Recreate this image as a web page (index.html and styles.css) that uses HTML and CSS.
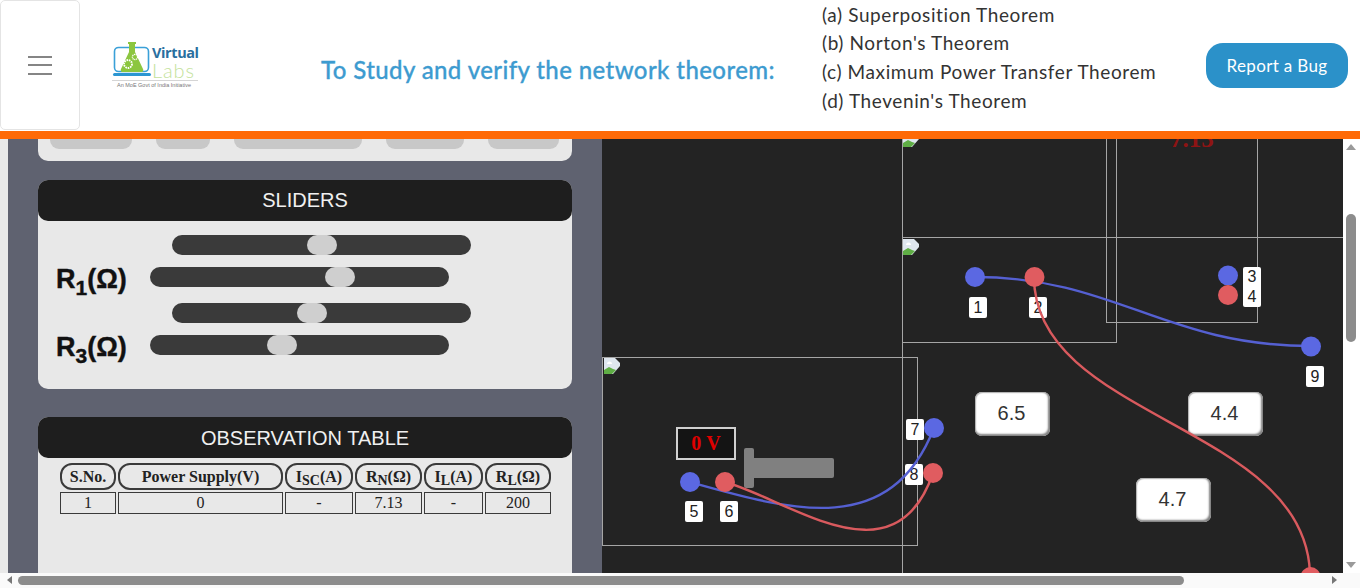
FILE: index.html
```html
<!DOCTYPE html>
<html lang="en">
<head>
<meta charset="utf-8">
<title>Virtual Labs - Network Theorem</title>
<link rel="stylesheet" href="styles.css">
</head>
<body>
<div class="page">
  <header class="topbar">
    <button class="menu" aria-label="Menu"><span></span><span></span><span></span></button>
    <svg class="logo" viewBox="0 0 88 50" width="88" height="50">
      <rect x="2.5" y="6.5" width="34" height="24" rx="4" fill="none" stroke="#3aa0d8" stroke-width="1.6"/>
      <rect x="1" y="32" width="38" height="3" rx="1.5" fill="#2b96d2"/>
      <path d="M16 1h8v2h-1v8l8 17a2 2 0 0 1-2 3H11a2 2 0 0 1-2-3l8-17V3h-1z" fill="#8cc63f"/>
      <circle cx="16" cy="23" r="4" fill="none" stroke="#fff" stroke-width="1.8" stroke-dasharray="1.6 .8"/>
      <circle cx="23" cy="16" r="2.6" fill="none" stroke="#fff" stroke-width="1.3" stroke-dasharray="1.2 .6"/>
      <text class="logo-virtual" x="40" y="17">Virtual</text>
      <text class="logo-labs" x="40" y="37">Labs</text>
      <rect x="0" y="39" width="86" height="1" fill="#d5d5d5"/>
      <text class="logo-tag" x="5" y="46">An MoE Govt of India Initiative</text>
    </svg>
    <h1 class="title">To Study and verify the network theorem:</h1>
    <ul class="aims">
      <li>(a) Superposition Theorem</li>
      <li>(b) Norton's Theorem</li>
      <li>(c) Maximum Power Transfer Theorem</li>
      <li>(d) Thevenin's Theorem</li>
    </ul>
    <button class="bug">Report a Bug</button>
  </header>

  <div class="main">
    <div class="gutter"></div>
    <aside class="panel">
      <section class="card card-controls">
        <div class="pills">
          <span class="pill p1"></span><span class="pill p2"></span><span class="pill p3"></span><span class="pill p4"></span><span class="pill p5"></span>
        </div>
      </section>

      <section class="card card-sliders">
        <h2 class="card-head">SLIDERS</h2>
        <div class="sliders">
          <div class="track track-top"><span class="thumb" style="left:135px"></span></div>
          <div class="slider-row">
            <div class="r-label">R<sub>1</sub>(Ω)</div>
            <div class="track"><span class="thumb" style="left:175px"></span></div>
          </div>
          <div class="track track-top gap-big"><span class="thumb" style="left:125px"></span></div>
          <div class="slider-row">
            <div class="r-label">R<sub>3</sub>(Ω)</div>
            <div class="track"><span class="thumb" style="left:117px"></span></div>
          </div>
        </div>
      </section>

      <section class="card card-table">
        <h2 class="card-head">OBSERVATION TABLE</h2>
        <table class="obs">
          <thead>
            <tr>
              <th class="c1">S.No.</th>
              <th class="c2">Power Supply(V)</th>
              <th class="c3">I<sub>SC</sub>(A)</th>
              <th class="c4">R<sub>N</sub>(Ω)</th>
              <th class="c5">I<sub>L</sub>(A)</th>
              <th class="c6">R<sub>L</sub>(Ω)</th>
            </tr>
          </thead>
          <tbody>
            <tr><td>1</td><td>0</td><td>-</td><td>7.13</td><td>-</td><td>200</td></tr>
          </tbody>
        </table>
      </section>
    </aside>

    <main class="canvas">
      <div class="box b-top"></div>
      <div class="box b-right"></div>
      <div class="box b-wide"></div>
      <div class="box b-source"></div>

      <svg class="broken bi1" viewBox="0 0 16 16" width="16" height="16"><path d="M0 0h11l5 5v11H0z" fill="#dfe7ef"/><path d="M0 16v-4l5-3 4 2 3 1-4 4z" fill="#5fae45"/><path d="M16 8v8h-7z" fill="#232323"/><path d="M3 6a2.500 2.500 0 0 1 5 0z" fill="#fff"/></svg>
      <svg class="broken bi2" viewBox="0 0 16 16" width="16" height="16"><path d="M0 0h11l5 5v11H0z" fill="#dfe7ef"/><path d="M0 16v-4l5-3 4 2 3 1-4 4z" fill="#5fae45"/><path d="M16 8v8h-7z" fill="#232323"/><path d="M3 6a2.500 2.500 0 0 1 5 0z" fill="#fff"/></svg>
      <svg class="broken bi3" viewBox="0 0 16 16" width="16" height="16"><path d="M0 0h11l5 5v11H0z" fill="#dfe7ef"/><path d="M0 16v-4l5-3 4 2 3 1-4 4z" fill="#5fae45"/><path d="M16 8v8h-7z" fill="#232323"/><path d="M3 6a2.500 2.500 0 0 1 5 0z" fill="#fff"/></svg>

      <div class="reading">7.13</div>

      <div class="volt">0 V</div>
      <div class="knob-stem"></div>
      <div class="knob-bar"></div>

      <div class="val v65">6.5</div>
      <div class="val v44">4.4</div>
      <div class="val v47">4.7</div>

      <span class="tag t1">1</span>
      <span class="tag t2">2</span>
      <span class="tag t3">3</span>
      <span class="tag t4">4</span>
      <span class="tag t5">5</span>
      <span class="tag t6">6</span>
      <span class="tag t7">7</span>
      <span class="tag t8">8</span>
      <span class="tag t9">9</span>

      <svg class="wires" viewBox="0 0 741 434" width="741" height="434">
        <g class="wire-b">
          <path d="M373 138C513 138 563 207 709 207"/>
          <path d="M88 343C188 371 288 401 332 289"/>
        </g>
        <g class="wire-r">
          <path d="M432 138C432 281 708 286 708 438"/>
          <path d="M123 343C188 361 293 446 331 334"/>
        </g>
        <g class="dot-b">
          <circle cx="373" cy="138" r="10"/>
          <circle cx="626" cy="136.500" r="10"/>
          <circle cx="709" cy="207.500" r="10"/>
          <circle cx="88" cy="343" r="10"/>
          <circle cx="332" cy="289" r="10"/>
        </g>
        <g class="dot-r">
          <circle cx="432.500" cy="138" r="10"/>
          <circle cx="626" cy="156" r="10"/>
          <circle cx="123" cy="343" r="10"/>
          <circle cx="331" cy="334" r="10"/>
          <circle cx="708.500" cy="438" r="10"/>
        </g>
      </svg>
    </main>

    <div class="vscroll">
      <span class="arrow-up"></span>
      <span class="vthumb"></span>
      <span class="arrow-down"></span>
    </div>
  </div>

  <div class="hscroll">
    <span class="arrow-left"></span>
    <span class="hthumb"></span>
    <span class="arrow-right"></span>
  </div>
</div>
</body>
</html>
```
FILE: styles.css
```css
* { box-sizing: border-box; }
html, body { margin: 0; padding: 0; height: 100%; overflow: hidden; background: #fff; }
.page { display: flex; flex-direction: column; width: 1360px; height: 588px; overflow: hidden; font-family: "Liberation Sans", Arial, sans-serif; }

/* header */
.topbar { display: flex; align-items: center; height: 139px; flex: none; border-bottom: 8px solid #ff6a07; background: #fff; }
.menu { display: flex; flex-direction: column; justify-content: center; gap: 6.500px; width: 80px; height: 130px; flex: none; padding: 0 27px; background: #fff; border: 1px solid #e4e4e4; border-radius: 5px; align-self: flex-start; }
.menu span { display: block; height: 2px; background: #858585; }
.logo { flex: none; margin: 41px 0 0 32px; align-self: flex-start; }
.logo-virtual { font: 700 14.500px/15px "Open Sans", sans-serif; fill: #2a6f9f; letter-spacing: -.4px; }
.logo-labs { font: 300 20px/20px "Lato", sans-serif; fill: #c4e29b; letter-spacing: .9px; }
.logo-tag { font: 5.500px "Liberation Sans", sans-serif; fill: #777; }
.title { flex: none; width: 455px; margin: 8px 0 0 121px; font: 500 24px "Lato", sans-serif; color: #3d9bd0; letter-spacing: .4px; white-space: nowrap; -webkit-text-stroke: .3px #3d9bd0; }
.aims { flex: none; width: 384px; margin: 0 0 0 46px; padding: .5px 0 0; list-style: none; font: 19px/28.700px "Lato", sans-serif; color: #333; letter-spacing: .6px; white-space: nowrap; align-self: flex-start; }
.bug { flex: none; width: 142px; height: 45px; margin-top: -1px; padding: 0; background: #2b91c9; color: #fff; border: 0; border-radius: 17px; font: 17px "Lato", sans-serif; letter-spacing: .35px; }

/* main row */
.main { display: flex; flex: none; height: 434px; overflow: hidden; }
.gutter { flex: none; width: 8px; background: #e9e9e9; }
.panel { flex: none; width: 594px; padding: 0 30px; background: #5f6270; overflow: hidden; }
.card { background: #e8e8e8; border-radius: 10px; }
.card-controls { height: 22px; border-radius: 0 0 10px 10px; padding: 0 12px; margin-bottom: 19px; }
.pills { display: flex; gap: 24px; }
.pill { display: block; height: 10px; background: #c8c8c8; border-radius: 0 0 9px 9px; }
.p1 { width: 82px; }
.p2 { width: 54px; }
.p3 { width: 128px; }
.p4 { width: 78px; }
.p5 { width: 71px; }
.card-sliders { height: 209px; margin-bottom: 28px; }
.card-table { height: 200px; border-radius: 10px 10px 0 0; }
.card-head { height: 41px; margin: 0; background: #1e1e1e; border-radius: 10px; color: #f0f0f0; font: 400 20px/41px "Liberation Sans", Arial, sans-serif; text-align: center; }
.card-table .card-head { line-height: 43px; }
.sliders { display: flex; flex-direction: column; padding: 14px 0 0 18px; }
.track { position: relative; width: 299px; height: 20px; background: #3a3a3a; border-radius: 10px; flex: none; }
.track-top { margin: 0 0 12px 116px; }
.gap-big { margin-top: 16px; }
.slider-row { display: flex; align-items: flex-start; height: 20px; }
.r-label { width: 94px; height: 20px; flex: none; font: 700 27px/24px "Liberation Sans", Arial, sans-serif; color: #111; white-space: nowrap; -webkit-text-stroke: .4px #111; }
.r-label sub { font-size: 21px; line-height: 0; vertical-align: -7px; }
.thumb { position: absolute; top: 0; width: 30px; height: 20px; background: #cfcfcf; border-radius: 10px; }

/* table */
.obs { margin: 3px 0 0 20px; table-layout: fixed; width: 495px; border-collapse: separate; border-spacing: 2px; font-family: "Liberation Serif", "Times New Roman", serif; color: #222; }
.obs th { height: 27px; padding: 0; font-size: 16px; font-weight: 700; border: 2px solid #3a3a3a; border-radius: 12px; text-align: center; white-space: nowrap; }
.obs th sub { font-size: 14px; line-height: 0; vertical-align: -3px; }
.obs td { height: 22px; padding: 0; font-size: 16px; border: 1px solid #3a3a3a; text-align: center; }
.c1 { width: 56px; }
.c2 { width: 165px; }
.c3 { width: 68px; }
.c4 { width: 67px; }
.c5 { width: 59px; }
.c6 { width: 66px; }

/* canvas */
.canvas { position: relative; flex: none; width: 741px; background: #232323; overflow: hidden; }
.box { position: absolute; border: 1px solid #a5a5a5; }
.b-top { left: 300px; top: -60px; width: 215px; height: 264px; }
.b-right { left: 504px; top: -60px; width: 152px; height: 244px; }
.b-wide { left: 300px; top: 98px; width: 600px; height: 500px; }
.b-source { left: 0; top: 218px; width: 316px; height: 189px; }
.broken { position: absolute; }
.bi1 { left: 301px; top: -8px; }
.bi2 { left: 301px; top: 100px; }
.bi3 { left: 2px; top: 219px; }
.reading { position: absolute; left: 568px; top: -14px; font: 700 25px "Liberation Serif", serif; color: #8e1414; }
.volt { position: absolute; left: 74px; top: 288px; width: 60px; height: 33px; background: #141414; border: 2px solid #d0d0d0; color: #e00000; font: 700 20px/29px "Liberation Serif", serif; text-align: center; letter-spacing: .2px; }
.knob-stem { position: absolute; left: 142px; top: 309px; width: 10px; height: 40px; background: #808080; border-radius: 2px; }
.knob-bar { position: absolute; left: 152px; top: 319px; width: 80px; height: 20px; background: #808080; border-radius: 0 2px 2px 0; }
.val { position: absolute; width: 75px; height: 44px; padding-right: 2px; background: #fff; border-radius: 7px; box-shadow: inset -1px -1px 2px 1px #808080, inset 1px 1px 1px #c4c4c4; color: #333; font: 20px/43px "Liberation Sans", Arial, sans-serif; text-align: center; }
.v65 { left: 373px; top: 253px; }
.v44 { left: 586px; top: 253px; }
.v47 { left: 534px; top: 339px; }
.tag { position: absolute; width: 18px; height: 21px; background: #fff; border-radius: 2px; color: #222; font: 16px/21px "Liberation Sans", Arial, sans-serif; text-align: center; }
.t1 { left: 367px; top: 158px; }
.t2 { left: 427px; top: 158px; }
.t3 { left: 641px; top: 128px; height: 20px; line-height: 20px; border-radius: 2px 2px 0 0; }
.t4 { left: 641px; top: 148px; height: 20px; line-height: 20px; border-radius: 0 0 2px 2px; }
.t5 { left: 83px; top: 362px; }
.t6 { left: 118px; top: 362px; }
.t7 { left: 304px; top: 280px; }
.t8 { left: 303px; top: 325px; }
.t9 { left: 704px; top: 227px; }
.wires { position: absolute; left: 0; top: 0; }
.wire-b path, .wire-r path { fill: none; stroke-width: 2.400px; }
.wire-b path { stroke: #5560d2; }
.wire-r path { stroke: #d95a5e; }
.dot-b circle { fill: #5b68e2; }
.dot-r circle { fill: #e05c60; }

/* scrollbars */
.vscroll { position: relative; flex: none; width: 17px; background: #fff; }
.vthumb { position: absolute; left: 3px; top: 75px; width: 10px; height: 128px; background: #8c8c8c; border-radius: 5px; }
.arrow-up { position: absolute; left: 3px; top: 5px; border: 5px solid transparent; border-top: 0; border-bottom: 6px solid #9a9a9a; }
.arrow-down { position: absolute; left: 3px; bottom: 5px; border: 5px solid transparent; border-bottom: 0; border-top: 6px solid #9a9a9a; }
.hscroll { position: relative; flex: none; height: 15px; background: #fafafa; }
.hthumb { position: absolute; left: 18px; top: 3px; width: 1166px; height: 9px; background: #8c8c8c; border-radius: 5px; }
.arrow-left { position: absolute; left: 7px; top: 3px; border: 4.500px solid transparent; border-left: 0; border-right: 5px solid #777; }
.arrow-right { position: absolute; left: 1332px; top: 3px; border: 4.500px solid transparent; border-right: 0; border-left: 5px solid #777; }
```
